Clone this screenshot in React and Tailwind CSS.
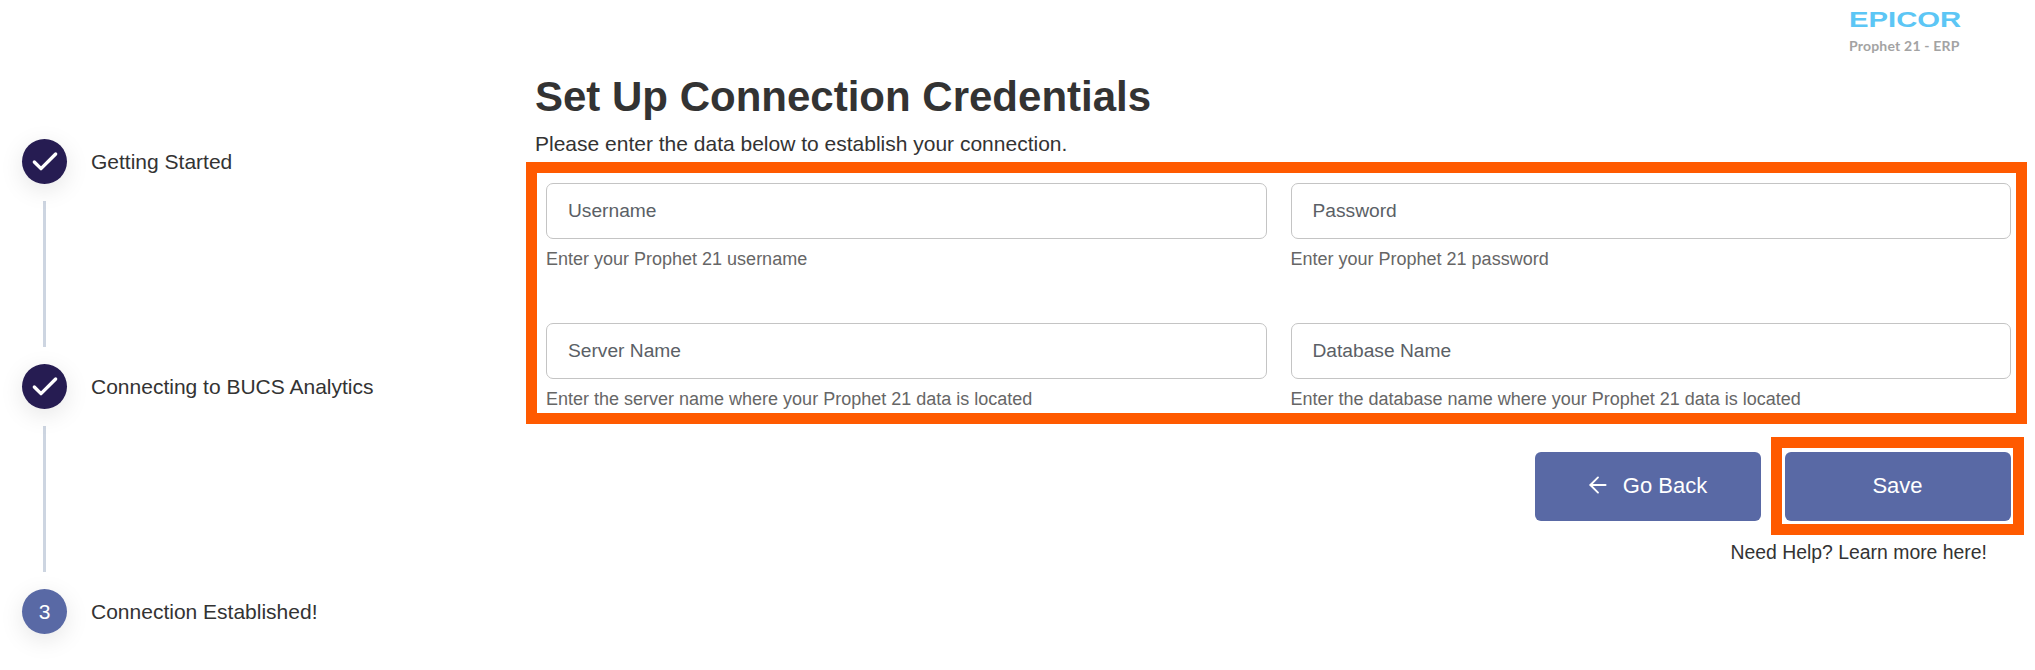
import { ArrowLeft, Check } from "lucide-react";

const steps = [
  { label: "Getting Started", done: true },
  { label: "Connecting to BUCS Analytics", done: true },
  { label: "Connection Established!", done: false, num: 3 },
];

const fields = [
  { name: "Username", help: "Enter your Prophet 21 username" },
  { name: "Password", help: "Enter your Prophet 21 password" },
  { name: "Server Name", help: "Enter the server name where your Prophet 21 data is located" },
  { name: "Database Name", help: "Enter the database name where your Prophet 21 data is located" },
];

function Stepper() {
  return (
    <aside className="w-[535px] shrink-0 pt-[139px] pl-[22px]">
      {steps.map((step, i) => (
        <div key={step.label}>
          <div className="flex items-center gap-[24px]">
            <div
              className={`flex h-[45px] w-[45px] items-center justify-center rounded-full text-[21px] text-white shadow-[0_6px_24px_rgba(0,0,0,0.1)] ${
                step.done ? "bg-[#261c52]" : "bg-[#5969a5]"
              }`}
            >
              {step.done ? <Check size={32} strokeWidth={2.5} /> : step.num}
            </div>
            <span className="text-[21px] text-[#333]">{step.label}</span>
          </div>
          {i < steps.length - 1 && (
            <div className="my-[17px] ml-[21px] h-[146px] w-[3px] bg-[#cdd5e1]" />
          )}
        </div>
      ))}
    </aside>
  );
}

function Logo() {
  return (
    <div className="flex h-[72px] justify-end pt-[8px] pr-[73px]">
      <div className="w-[113px]">
        <div className="origin-left scale-x-[1.33] text-[22px] leading-[24px] font-bold text-[#5cc6f5]">
          EPICOR
        </div>
        <div className="mt-[5px] text-[14px] leading-[18px] font-bold tracking-[0.2px] whitespace-nowrap text-[#a3a3a3] font-['Lato',sans-serif]">
          Prophet 21 - ERP
        </div>
      </div>
    </div>
  );
}

export default function App() {
  return (
    <div className="flex h-[670px] w-[2035px] overflow-hidden bg-white font-['Liberation_Sans',Arial,sans-serif] text-[#333]">
      <Stepper />
      <main className="flex-1">
        <Logo />
        <h1 className="text-[42px] leading-[50px] font-bold">Set Up Connection Credentials</h1>
        <p className="mt-[10px] text-[21px] leading-[24px]">
          Please enter the data below to establish your connection.
        </p>
        <div className="mt-[6px] -ml-[9px] box-border h-[262px] w-[1501px] border-[11px] border-[#ff5a00] pt-[10px] pl-[9px]">
          <div className="grid w-[1465px] grid-cols-2 gap-x-[24px] gap-y-[53px]">
            {fields.map((f) => (
              <div key={f.name}>
                <input
                  placeholder={f.name}
                  className="box-border block h-[56px] w-full rounded-[7px] border border-[#c4c4c4] bg-white pl-[21px] text-[19.2px] outline-none placeholder:text-[#5b5f66]"
                />
                <p className="mt-[10px] text-[18px] leading-[21px] text-[#666]">{f.help}</p>
              </div>
            ))}
          </div>
        </div>
        <div className="mt-[13px] -ml-[9px] flex w-[1501px] justify-end">
          <div className="flex items-center gap-[10px] pr-[3px]">
            <button className="flex h-[69px] w-[226px] items-center justify-center gap-[12px] rounded-[6px] bg-[#5969a5] pr-[4px] pb-[2px] text-[22px] text-white">
              <ArrowLeft size={26} strokeWidth={1.75} />
              Go Back
            </button>
            <div className="box-border flex h-[98px] w-[253px] items-center justify-center border-[11px] border-[#ff5a00]">
              <button className="h-[69px] w-[226px] rounded-[6px] bg-[#5969a5] pb-[2px] text-[22px] text-white">
                Save
              </button>
            </div>
          </div>
        </div>
        <p className="mt-[5px] pr-[48px] text-right text-[19.4px] leading-[24px]">
          Need Help? Learn more here!
        </p>
      </main>
    </div>
  );
}
